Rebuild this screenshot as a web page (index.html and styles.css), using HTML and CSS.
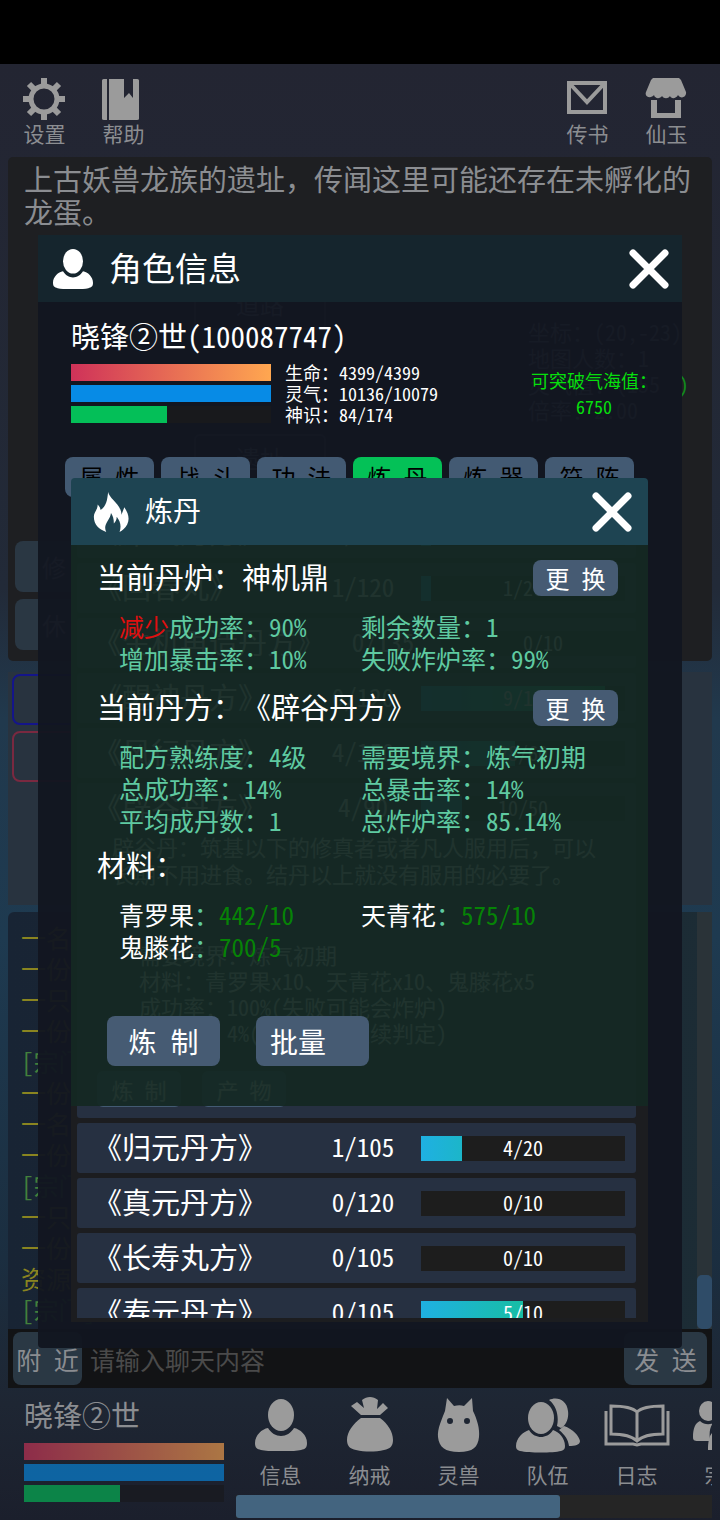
FILE: index.html
```html
<!DOCTYPE html>
<html lang="zh-CN">
<head>
    <meta charset="UTF-8">
    <meta name="viewport" content="width=device-width, initial-scale=1">
    <title>炼丹</title>
    <link rel="stylesheet" href="styles.css">
</head>
<body>

<!-- shared icons -->
<svg class="defs" aria-hidden="true">
    <symbol id="person" viewBox="0 0 52 52">
        <ellipse cx="26" cy="16" rx="13" ry="16"/>
        <path d="M13 29c3 5 8 8 13 8s10-3 13-8c6 1 13 7 13 15 0 5-2 6-6 7-9 2-31 2-40 0-4-1-6-2-6-7 0-8 7-14 13-15z"/>
    </symbol>
    <symbol id="close" viewBox="0 0 40 40">
        <path d="M4 4L36 36M36 4L4 36" fill="none" stroke="#fff" stroke-width="7" stroke-linecap="round"/>
    </symbol>
</svg>

<div class="game">
    <header class="top">
        <button class="tool">
            <svg viewBox="0 0 42 42">
                <g stroke="#9b9b9b" stroke-width="6" stroke-linejoin="round" fill="none">
                    <circle cx="21" cy="21" r="13" stroke-width="5"/>
                    <path d="M21 0v8M21 34v8M0 21h8M34 21h8M6 6l6 6M30 30l6 6M36 6l-6 6M12 30l-6 6"/>
                </g>
            </svg>
            <span>设置</span>
        </button>
        <button class="tool">
            <svg viewBox="0 0 42 42">
                <path d="M2 1h3v41H2c-2 0-2-1-2-2V3c0-1 0-2 2-2zM7 1h15v19l5-5 4 5V1h4c2 0 2 1 2 2v37c0 1 0 2-2 2H7z"/>
            </svg>
            <span>帮助</span>
        </button>
        <span class="grow"></span>
        <button class="tool">
            <svg viewBox="0 0 42 42">
                <path d="M3 5h36v29H3zM5 7l16 17L37 7" fill="none" stroke="#9b9b9b" stroke-width="4"/>
            </svg>
            <span>传书</span>
        </button>
        <button class="tool">
            <svg viewBox="0 0 42 42">
                <path d="M8 0h26l2 2 5 12c1 6-6 7-8 3-2 4-7 4-8 1-2 3-6 3-8 0-2 3-7 3-8-1-3 4-10 2-8-3L6 2zM6 22h6v13h18V22h6v18H6z"/>
            </svg>
            <span>仙玉</span>
        </button>
    </header>

    <section class="scene">
        <p class="story">上古妖兽龙族的遗址，传闻这里可能还存在未孵化的龙蛋。</p>
        <div class="map">
            <div class="node road">道路</div>
            <div class="node here">遗址</div>
            <p class="place">坐标：(20,-23)<br>地图人数：1<br>灵气值：(155<b>)</b><br>倍率：2.00</p>
        </div>
        <div class="acts">
            <button>修 炼</button>
            <button>休 息</button>
        </div>
    </section>

    <section class="people">
        <div class="who"></div>
        <div class="who foe"></div>
    </section>

    <section class="chat">
        <ul>
            <li>一名修士路过</li>
            <li>一份灵草</li>
            <li>一只妖兽</li>
            <li>一份灵石</li>
            <li class="sys">[宗门]消息</li>
            <li>一份灵草</li>
            <li>一名修士路过</li>
            <li>一份灵石</li>
            <li class="sys">[宗门]消息</li>
            <li>一只妖兽</li>
            <li>一份灵草</li>
            <li>资源点刷新</li>
            <li class="sys">[宗门]消息</li>
        </ul>
        <div class="track"><div class="thumb"></div></div>
    </section>

    <form class="say">
        <button type="button">附 近</button>
        <input type="text" aria-label="聊天内容" placeholder="请输入聊天内容">
        <button type="button" class="send">发 送</button>
    </form>

    <footer class="dock">
        <div class="me">
            <p>晓锋②世</p>
            <div class="bars">
                <div class="bar hp"></div>
                <div class="bar mp"></div>
                <div class="bar sp" style="--v: 48%"></div>
            </div>
        </div>
        <div class="menu">
            <nav>
                <button>
                    <svg viewBox="0 0 52 56"><use href="#person" width="52" height="52" y="2"/></svg>
                    <span>信息</span>
                </button>
                <button>
                    <svg viewBox="0 0 52 56">
                        <path d="M17 18L7 9l6-4 7 6-2-8c5-4 11-4 16 0l-1 9 6-6 5 5-8 7zM17 21h19c8 6 13 14 13 22 0 6-3 9-9 10-9 2-19 2-28 0-6-1-9-4-9-10 0-8 6-16 14-22z"/>
                    </svg>
                    <span>纳戒</span>
                </button>
                <button>
                    <svg viewBox="0 0 52 56">
                        <path fill-rule="evenodd" d="M12 14L14 1l7 8c4-1 7-1 10 0l8-8 1 13c4 8 7 18 6 26-1 10-6 15-20 15S6 50 5 40c-1-8 4-18 7-26zM17 21a3 3 0 1 0 0 6 3 3 0 0 0 0-6zM34 21a3 3 0 1 0 0 6 3 3 0 0 0 0-6z"/>
                    </svg>
                    <span>灵兽</span>
                </button>
                <button>
                    <svg viewBox="0 0 66 56">
                        <ellipse cx="26" cy="21" rx="13" ry="16"/>
                        <path d="M14 33c3 5 8 7 12 7s9-2 12-7c6 2 12 8 12 16 0 3-1 4-4 5-8 2-32 2-41 0-3-1-4-2-4-5 0-8 7-14 13-16z"/>
                        <path d="M34 3c8-4 18 0 19 11 1 8-2 14-7 17l-4-2c2-9 0-20-8-26zM49 29c9 3 15 10 16 15 0 4-5 5-11 5-1-7-4-11-10-16z"/>
                    </svg>
                    <span>队伍</span>
                </button>
                <button>
                    <svg viewBox="0 0 66 56">
                        <path d="M33 15c-5-5-15-6-26-6v28c11 0 20 1 26 7 6-6 15-7 26-7V9c-11 0-21 1-26 6zv28M2 14v33h27l4 1 4-1h27V14" fill="none" stroke="#9b9b9b" stroke-width="3"/>
                    </svg>
                    <span>日志</span>
                </button>
                <button>
                    <svg viewBox="0 0 66 56">
                        <ellipse cx="15" cy="14" rx="9" ry="10"/>
                        <path d="M7 24c4 4 10 4 13 2-3 4-4 9-3 18H5c-4 0-5-1-5-4 0-8 2-14 7-16z"/>
                        <ellipse cx="28" cy="24" rx="9" ry="10"/>
                        <path d="M20 35c4 3 12 3 16 0 5 3 7 10 7 18H15c0-8 1-15 5-18z"/>
                    </svg>
                    <span>宗门</span>
                </button>
            </nav>
            <div class="slide"><div></div></div>
        </div>
    </footer>

    <!-- 角色信息 -->
    <section class="dialog info">
        <header>
            <svg class="mark" viewBox="0 0 52 52"><use href="#person"/></svg>
            <h2>角色信息</h2>
            <button class="x" aria-label="关闭"><svg viewBox="0 0 40 40"><use href="#close"/></svg></button>
        </header>
        <h3>晓锋②世(100087747)</h3>
        <div class="stats">
            <div class="bars">
                <div class="bar hp"></div>
                <div class="bar mp"></div>
                <div class="bar sp" style="--v: 48%"></div>
            </div>
            <p>生命：4399/4399<br>灵气：10136/10079<br>神识：84/174</p>
            <p class="sea">可突破气海值：<br>6750</p>
        </div>
        <nav class="tabs">
            <button>属 性</button>
            <button>战 斗</button>
            <button>功 法</button>
            <button class="on">炼 丹</button>
            <button>炼 器</button>
            <button>符 阵</button>
        </nav>
        <div class="list">
            <div class="item"><b>《聚气丹方》</b><span>1/105</span><div class="rate" style="--v: 5%">1/20</div></div>
            <div class="item"><b>《回春丸》</b><span>1/120</span><div class="rate" style="--v: 5%">1/20</div></div>
            <div class="item"><b>《生机再造丹方》</b><span>0/135</span><div class="rate" style="--v: 0%">0/10</div></div>
            <div class="item"><b>《醒神丹方》</b><span>0/120</span><div class="rate" style="--v: 90%">9/10</div></div>
            <div class="item"><b>《风行丹方》</b><span>4/150</span><div class="rate" style="--v: 46%">28/60</div></div>
            <div class="item open">
                <b>《辟谷丹方》</b><span>4/90</span><div class="rate" style="--v: 20%">10/50</div>
                <div class="more">
                    <p>辟谷丹：筑基以下的修真者或者凡人服用后，可以长期不用进食。结丹以上就没有服用的必要了。</p>
                    <p class="need">需要境界：炼气初期<br>材料：青罗果x10、天青花x10、鬼滕花x5<br>成功率：100%(失败可能会炸炉)<br>暴击率：4%(暴击后会继续判定)</p>
                    <button>炼 制</button>
                    <button>产 物</button>
                </div>
            </div>
            <div class="item"><b>《归元丹方》</b><span>1/105</span><div class="rate" style="--v: 20%">4/20</div></div>
            <div class="item"><b>《真元丹方》</b><span>0/120</span><div class="rate" style="--v: 0%">0/10</div></div>
            <div class="item"><b>《长寿丸方》</b><span>0/105</span><div class="rate" style="--v: 0%">0/10</div></div>
            <div class="item"><b>《寿元丹方》</b><span>0/105</span><div class="rate" style="--v: 50%">5/10</div></div>
        </div>
    </section>

    <!-- 炼丹 -->
    <section class="dialog alchemy">
        <header>
            <svg class="mark" viewBox="0 0 40 42">
                <path d="M17 0c1 7 14 13 14 24l3-8c4 6 6 12 3 18-2 4-5 6-8 8 2-6 1-11-3-16 0 3-1 5-3 7 0-5-1-8-3-11-1 8-9 12-5 20-8-3-13-8-13-16 0-5 4-7 4-13 2 2 3 4 3 6C15 15 16 9 17 0z"/>
            </svg>
            <h2>炼丹</h2>
            <button class="x" aria-label="关闭"><svg viewBox="0 0 40 40"><use href="#close"/></svg></button>
        </header>
        <div class="body">
            <div class="line"><h3>当前丹炉：神机鼎</h3><button>更 换</button></div>
            <div class="grid">
                <p><em>减少</em>成功率：90%</p><p>剩余数量：1</p>
                <p>增加暴击率：10%</p><p>失败炸炉率：99%</p>
            </div>
            <div class="line"><h3>当前丹方：《辟谷丹方》</h3><button>更 换</button></div>
            <div class="grid recipe">
                <p>配方熟练度：4级</p><p>需要境界：炼气初期</p>
                <p>总成功率：14%</p><p>总暴击率：14%</p>
                <p>平均成丹数：1</p><p>总炸炉率：85.14%</p>
            </div>
            <div class="line"><h3>材料：</h3></div>
            <div class="grid goods">
                <p><i>青罗果</i>：<strong>442/10</strong></p><p><i>天青花</i>：<strong>575/10</strong></p>
                <p><i>鬼滕花</i>：<strong>700/5</strong></p>
            </div>
            <div class="make">
                <button>炼 制</button>
                <select aria-label="批量"><option>批量</option></select>
            </div>
        </div>
    </section>
</div>

</body>
</html>
```
FILE: styles.css
```css
* {
    box-sizing: border-box;
    margin: 0;
    padding: 0;
}
body {
    background: #000;
    color: #8b8d91;
    font-family: "Noto Sans Mono CJK SC", "Noto Sans CJK SC", sans-serif;
    font-size: 24px;
    text-spacing-trim: space-all;
}
button, input, select {
    font: inherit;
    color: inherit;
    border: 0;
    background: none;
}
button {
    white-space: nowrap;
    cursor: pointer;
}
svg {
    display: block;
    fill: #9b9b9b;
}
b, i, em, strong, h2, h3 {
    font-weight: normal;
    font-style: normal;
}
.defs {
    position: absolute;
    width: 0;
    height: 0;
}
.grow {
    flex: 1;
}

/* main screen */
.game {
    position: relative;
    display: flex;
    flex-direction: column;
    min-height: 100vh;
    border-top: 64px solid #000;
    padding: 0 8px;
    overflow: hidden;
    background: linear-gradient(#232532, #222a38 36%, #21394d 45%, #1e3a50 60%, #1b2e40 82%, #1e2633 92%, #1b1f2c);
}
.top {
    display: flex;
    align-items: flex-start;
    gap: 36px;
    padding: 14px 24px 0 15px;
    height: 93px;
}
.tool {
    width: 43px;
    font-size: 21px;
    line-height: 26px;
}
.tool svg {
    width: 42px;
    height: 42px;
}
.scene {
    height: 504px;
    border-radius: 5px;
    background: #1e1f22;
    display: flex;
    flex-direction: column;
}
.story {
    padding: 5px 16px 0;
    font-size: 29px;
    line-height: 33px;
}
.map {
    position: relative;
    flex: 1;
}
.node {
    position: absolute;
    left: 186px;
    width: 132px;
    height: 50px;
    border: 2px solid #50545c;
    border-radius: 6px;
    line-height: 44px;
    text-align: center;
}
.road {
    top: 52px;
}
.here {
    top: 206px;
}
.place {
    position: absolute;
    top: 90px;
    right: 30px;
    width: 154px;
    font-size: 22px;
    line-height: 26px;
    white-space: nowrap;
}
.place b {
    color: #128a1c;
    padding-left: 18px;
}
.acts {
    display: grid;
    gap: 7px;
    padding: 0 7px 11px;
}
.acts button {
    width: 114px;
    height: 51px;
    border-radius: 8px;
    background: #2a3743;
}
.people {
    height: 233px;
    margin-top: 11px;
    padding: 2px 4px;
    background: #28333f;
}
.who {
    height: 51px;
    border: 2px solid #14158a;
    border-radius: 8px;
    margin-bottom: 6px;
    width: 340px;
}
.foe {
    border-color: #7a2940;
}
.chat {
    display: flex;
    justify-content: space-between;
    flex: 1;
    margin-top: 7px;
    border-radius: 6px 6px 0 0;
    background: linear-gradient(90deg, #182434, #1c2c35);
}
.chat ul {
    list-style: none;
    padding: 10px 13px 0;
    font-size: 25px;
    line-height: 31px;
    color: #8a8420;
}
.chat .sys {
    color: #43803c;
}
.track {
    width: 15px;
    display: flex;
    align-items: flex-end;
    background: #2a3338;
}
.thumb {
    width: 100%;
    height: 54px;
    border-radius: 5px;
    background: #2f4c68;
}
.say {
    display: flex;
    gap: 8px;
    height: 59px;
    padding: 3px 5px;
    background: #121315;
    font-size: 25px;
}
.say button {
    width: 69px;
    border-radius: 8px;
    background: #2a3844;
}
.say input {
    flex: 1;
    min-width: 0;
}
.say input::placeholder {
    color: #4a4a4a;
    opacity: 1;
}
.say .send {
    width: 83px;
}
.dock {
    display: flex;
    gap: 12px;
    height: 132px;
}
.me {
    width: 216px;
    padding: 8px 0 0 16px;
}
.me p {
    font-size: 29px;
    line-height: 36px;
    margin-bottom: 11px;
}
.me .bars {
    opacity: .63;
}
.menu {
    flex: 1;
    min-width: 0;
    display: flex;
    flex-direction: column;
    overflow: hidden;
}
.menu nav {
    display: flex;
    align-items: flex-start;
    flex: 1;
    padding-top: 9px;
}
.menu button {
    flex: 0 0 89px;
    font-size: 21px;
    line-height: 28px;
}
.menu button svg {
    height: 56px;
    width: 66px;
    margin: 0 auto 7px;
}
.slide {
    height: 23px;
    margin-bottom: 2px;
    background: #252525;
}
.slide div {
    width: 68%;
    height: 100%;
    border-radius: 3px;
    background: #43647f;
}

/* bars */
.bars {
    display: grid;
    gap: 4px;
    width: 200px;
}
.bar {
    height: 17px;
}
.hp {
    background: linear-gradient(90deg, #cf3259, #ffa750);
}
.mp {
    background: #078be6;
}
.sp {
    background: linear-gradient(90deg, #04bf58 var(--v), #18191c var(--v));
}

/* dialogs */
.dialog {
    position: absolute;
    display: flex;
    flex-direction: column;
    color: #fff;
}
.dialog header {
    display: flex;
    align-items: center;
    flex: none;
    height: 67px;
}
.dialog svg {
    fill: #fff;
}
.mark {
    width: 40px;
    height: 40px;
    margin-right: 16px;
}
.x {
    margin-left: auto;
}
.x svg {
    width: 40px;
    height: 40px;
}
.dialog h2 {
    line-height: 40px;
    padding-bottom: 4px;
}
.dialog h3 {
    font-size: 29px;
    line-height: 32px;
}
.info {
    top: 171px;
    right: 38px;
    bottom: 172px;
    left: 38px;
    background: rgba(18, 22, 32, .96);
    border-radius: 4px;
    padding-bottom: 26px;
}
.info header {
    padding: 0 13px 0 15px;
    background: #15252d;
}
.info h2 {
    font-size: 33px;
}
.info h3 {
    padding: 17px 33px 11px;
}
.stats {
    display: flex;
    padding-left: 33px;
    font-size: 18px;
    line-height: 21px;
    height: 95px;
}
.stats .bars {
    align-content: start;
    padding-top: 2px;
}
.stats p {
    margin-left: 14px;
}
.stats .sea {
    margin: 5px 25px 0 auto;
    width: 126px;
    line-height: 26px;
    text-align: center;
    color: #06df0c;
}
.tabs {
    display: flex;
    gap: 7px;
    padding: 0 48px 0 27px;
}
.tabs button {
    flex: 1;
    height: 40px;
    border-radius: 8px;
    background: #435a73;
    color: #000;
    line-height: 40px;
}
.tabs .on {
    background: #04c157;
}
.list {
    flex: 1;
    min-height: 0;
    margin: 0 34px 0 33px;
    padding: 11px 12px 0 6px;
    border-bottom: 4px solid #1c1d20;
    background: #1c1d20;
    overflow: hidden;
    display: flex;
    flex-direction: column;
    gap: 5px;
}
.item {
    flex: none;
    display: grid;
    grid-template-columns: 1fr 116px 204px;
    align-items: center;
    padding: 0 11px 0 16px;
    border-radius: 3px;
    background: #263041;
    line-height: 46px;
}
.item b {
    font-size: 29px;
    white-space: nowrap;
    padding-bottom: 4px;
}
.item span {
    font-size: 25px;
    text-align: center;
    padding-bottom: 4px;
}
.rate {
    height: 25px;
    font-size: 20px;
    line-height: 23px;
    text-align: center;
    background: linear-gradient(90deg, transparent var(--v), #1d1d1d var(--v)), linear-gradient(90deg, #1fb0e2, #10cc66);
}
.more {
    grid-column: 1 / 4;
    padding: 0 0 11px 4px;
    font-size: 22px;
    line-height: 27px;
}
.more p {
    margin: 0 12px 54px 15px;
}
.more .need {
    line-height: 26px;
    margin: 0 0 26px 42px;
}
.more button {
    width: 84px;
    height: 36px;
    border-radius: 6px;
    background: #435a73;
    margin-right: 10px;
}
.alchemy {
    top: 414px;
    right: 72px;
    left: 71px;
}
.alchemy header {
    padding: 0 16px 0 20px;
    border-radius: 4px 4px 0 0;
    background: #1e4452;
}
.alchemy .mark {
    margin-right: 14px;
}
.alchemy h2 {
    font-size: 28px;
}
.body {
    padding: 15px 30px 40px 26px;
    background: rgba(20, 40, 35, .95);
}
.line {
    display: flex;
    justify-content: space-between;
}
.line button {
    width: 85px;
    height: 36px;
    border-radius: 8px;
    background: #465b73;
    line-height: 32px;
}
.grid {
    display: grid;
    grid-template-columns: 242px 1fr;
    padding: 14px 0 16px 22px;
    font-size: 25px;
    line-height: 32px;
    color: #5fcaa1;
    white-space: nowrap;
}
.recipe {
    padding-bottom: 12px;
}
.goods {
    padding-top: 18px;
}
.grid em {
    color: #e00f0f;
}
.grid i {
    color: #fff;
}
.grid strong {
    color: #068306;
}
.make {
    display: flex;
    gap: 36px;
    padding: 38px 10px 0;
    font-size: 28px;
}
.make button, .make select {
    width: 113px;
    height: 50px;
    border-radius: 8px;
    background: #465b73;
}
.make select {
    appearance: none;
    padding-left: 14px;
}
```
